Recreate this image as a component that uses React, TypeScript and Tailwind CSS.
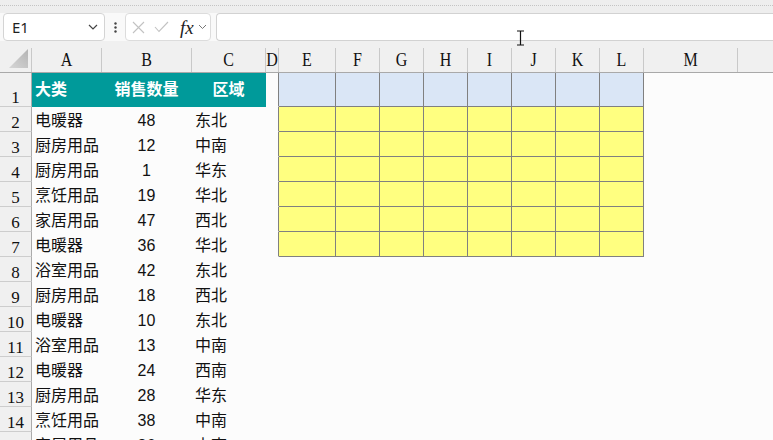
import React from 'react';

const COLS = [
  { k: 'A', w: 'w-[70px]' },
  { k: 'B', w: 'w-[90px]' },
  { k: 'C', w: 'w-[74px]' },
  { k: 'D', w: 'w-[13px]' },
  { k: 'E', w: 'w-[57px]' },
  { k: 'F', w: 'w-[44px]' },
  { k: 'G', w: 'w-[44px]' },
  { k: 'H', w: 'w-[44px]' },
  { k: 'I', w: 'w-[44px]' },
  { k: 'J', w: 'w-[44px]' },
  { k: 'K', w: 'w-[44px]' },
  { k: 'L', w: 'w-[44px]' },
  { k: 'M', w: 'w-[94px]' },
  { k: 'N', w: 'w-[94px]' },
];

const DATA: [string, number, string][] = [
  ['电暖器', 48, '东北'],
  ['厨房用品', 12, '中南'],
  ['厨房用品', 1, '华东'],
  ['烹饪用品', 19, '华北'],
  ['家居用品', 47, '西北'],
  ['电暖器', 36, '华北'],
  ['浴室用品', 42, '东北'],
  ['厨房用品', 18, '西北'],
  ['电暖器', 10, '东北'],
  ['浴室用品', 13, '中南'],
  ['电暖器', 24, '西南'],
  ['厨房用品', 28, '华东'],
  ['烹饪用品', 38, '中南'],
  ['家居用品', 36, '中南'],
];

const BOX = ['E', 'F', 'G', 'H', 'I', 'J', 'K', 'L'];

const cellFont = { fontFamily: '"Liberation Sans", "Noto Sans CJK SC", sans-serif' };
const headFont = { fontFamily: '"Liberation Serif", "DejaVu Serif", serif' };

function Toolbar() {
  return (
    <div className="h-[41px] bg-[#f9f9f9] shrink-0">
      {/* top strip */}
      <div className="h-[13px] bg-[#eeeeee] pt-[5px]">
        <div className="border-t border-dotted border-[#c4c4c4]" />
      </div>
      <div className="h-[28px] flex items-stretch">
        {/* name box */}
        <div className="ml-[3px] w-[102px] bg-white border border-[#d4d4d4] rounded-[4px] flex items-center pl-[8px] pr-[6px]">
          <span className="text-[15px] text-[#1f1f1f] leading-none" style={{ fontFamily: '"Noto Sans", sans-serif' }}>E1</span>
          <svg className="ml-auto" width="10" height="6" viewBox="0 0 10 6">
            <polyline points="1,1 5,5 9,1" fill="none" stroke="#444" strokeWidth="1.2" />
          </svg>
        </div>
        {/* dots */}
        <div className="w-[20px] flex items-center justify-center">
          <svg width="3" height="11" viewBox="0 0 3 11">
            <circle cx="1.5" cy="1.5" r="1.2" fill="#444" />
            <circle cx="1.5" cy="5.5" r="1.2" fill="#444" />
            <circle cx="1.5" cy="9.5" r="1.2" fill="#444" />
          </svg>
        </div>
        {/* fx box */}
        <div className="w-[86px] bg-white border border-[#dcdcdc] rounded-[4px] flex items-center pl-[6px]">
          <svg width="13" height="13" viewBox="0 0 13 13">
            <path d="M1 1 L12 12 M12 1 L1 12" stroke="#c2c2c2" strokeWidth="1.1" fill="none" />
          </svg>
          <svg className="ml-[9px]" width="15" height="12" viewBox="0 0 15 12">
            <polyline points="1,6 5,10.5 14,1" stroke="#c2c2c2" strokeWidth="1.1" fill="none" />
          </svg>
          <span className="ml-[11px] text-[19px] italic leading-none text-[#222]" style={{ fontFamily: '"Liberation Serif", serif' }}>
            fx
          </span>
          <svg className="ml-[4px]" width="9" height="6" viewBox="0 0 9 6">
            <polyline points="1,1 4.5,4.5 8,1" fill="none" stroke="#777" strokeWidth="1" />
          </svg>
        </div>
        {/* formula input */}
        <div className="ml-[5px] flex-1 bg-white border-t border-b border-l border-[#d2d2d2] rounded-l-[4px]" />
      </div>
    </div>
  );
}

function HeaderRow() {
  return (
    <div className="h-[32px] flex items-end bg-[#f0f0f0] border-b border-[#a9a9a9] shrink-0">
      <div className="w-[32px] h-[24px] shrink-0 border-r border-[#c9c9c9] relative">
        <svg className="absolute left-[9px] top-0" width="20" height="21" viewBox="0 0 20 21">
          <defs>
            <linearGradient id="cg" x1="0" y1="1" x2="1" y2="0">
              <stop offset="0" stopColor="#d6d6d6" />
              <stop offset="1" stopColor="#b4b4b4" />
            </linearGradient>
          </defs>
          <polygon points="0,20 19,20 19,1" fill="url(#cg)" />
        </svg>
      </div>
      {COLS.map((c) => (
        <div
          key={c.k}
          className={`${c.w} h-[24px] shrink-0 border-r border-[#c9c9c9] flex items-center justify-center overflow-hidden text-[16px] leading-none text-[#111]`}
          style={headFont}
        >
          <span className="inline-block scale-y-115">{c.k === 'N' ? '' : c.k}</span>
        </div>
      ))}
    </div>
  );
}

function Row({ r }: { r: number }) {
  const d = r >= 2 ? DATA[r - 2] : null;
  const h = r === 1 ? 'h-[34px]' : 'h-[25px]';
  return (
    <div className={`${h} flex shrink-0`}>
      <div
        className="w-[32px] h-full shrink-0 bg-[#f0f0f0] border-r border-b border-r-[#ababab] border-b-[#cdcdcd] flex items-end justify-center text-[17px] leading-none text-[#111]"
        style={headFont}
      >
        {r}
      </div>
      {COLS.map((c) => {
        let cls = 'border-transparent';
        let content: React.ReactNode = null;
        let align = 'justify-start';
        if (r === 1 && (c.k === 'A' || c.k === 'B' || c.k === 'C')) {
          cls = 'bg-[#009a9a] border-transparent text-white font-bold items-center';
          content = c.k === 'A' ? '大类' : c.k === 'B' ? '销售数量' : '区域';
          align = c.k === 'A' ? 'justify-start pl-[3px]' : 'justify-center';
        } else if (r <= 7 && BOX.includes(c.k)) {
          cls = r === 1 ? 'bg-[#dae6f6] border-[#808080]' : 'bg-[#ffff80] border-[#808080]';
        } else if (r <= 7 && c.k === 'D') {
          cls = 'border-b-transparent border-r-[#808080]';
        } else {
          cls = 'border-transparent items-end pb-[2px] text-[#111]';
        }
        if (d) {
          if (c.k === 'A') {
            content = d[0];
            align = 'justify-start pl-[3px]';
          } else if (c.k === 'B') {
            content = d[1];
            align = 'justify-center';
          } else if (c.k === 'C') {
            content = d[2];
            align = 'justify-start pl-[3px]';
          }
        }
        return (
          <div
            key={c.k}
            className={`${c.w} h-full shrink-0 border-r border-b flex ${align} ${cls} text-[16px] leading-[16px] whitespace-nowrap overflow-hidden`}
            style={cellFont}
          >
            {content}
          </div>
        );
      })}
    </div>
  );
}

export default function App() {
  const rows = Array.from({ length: 15 }, (_, i) => i + 1);
  return (
    <div className="w-[773px] h-[440px] overflow-hidden bg-[#fcfcfc] flex flex-col relative">
      <Toolbar />
      <HeaderRow />
      {rows.map((r) => (
        <Row key={r} r={r} />
      ))}
      {/* text cursor */}
      <svg className="absolute left-[516px] top-[30px]" width="9" height="16" viewBox="0 0 9 16">
        <path d="M1 1 H8 M4.5 1 V15 M1 15 H8" stroke="#111" strokeWidth="1.2" fill="none" />
      </svg>
    </div>
  );
}
